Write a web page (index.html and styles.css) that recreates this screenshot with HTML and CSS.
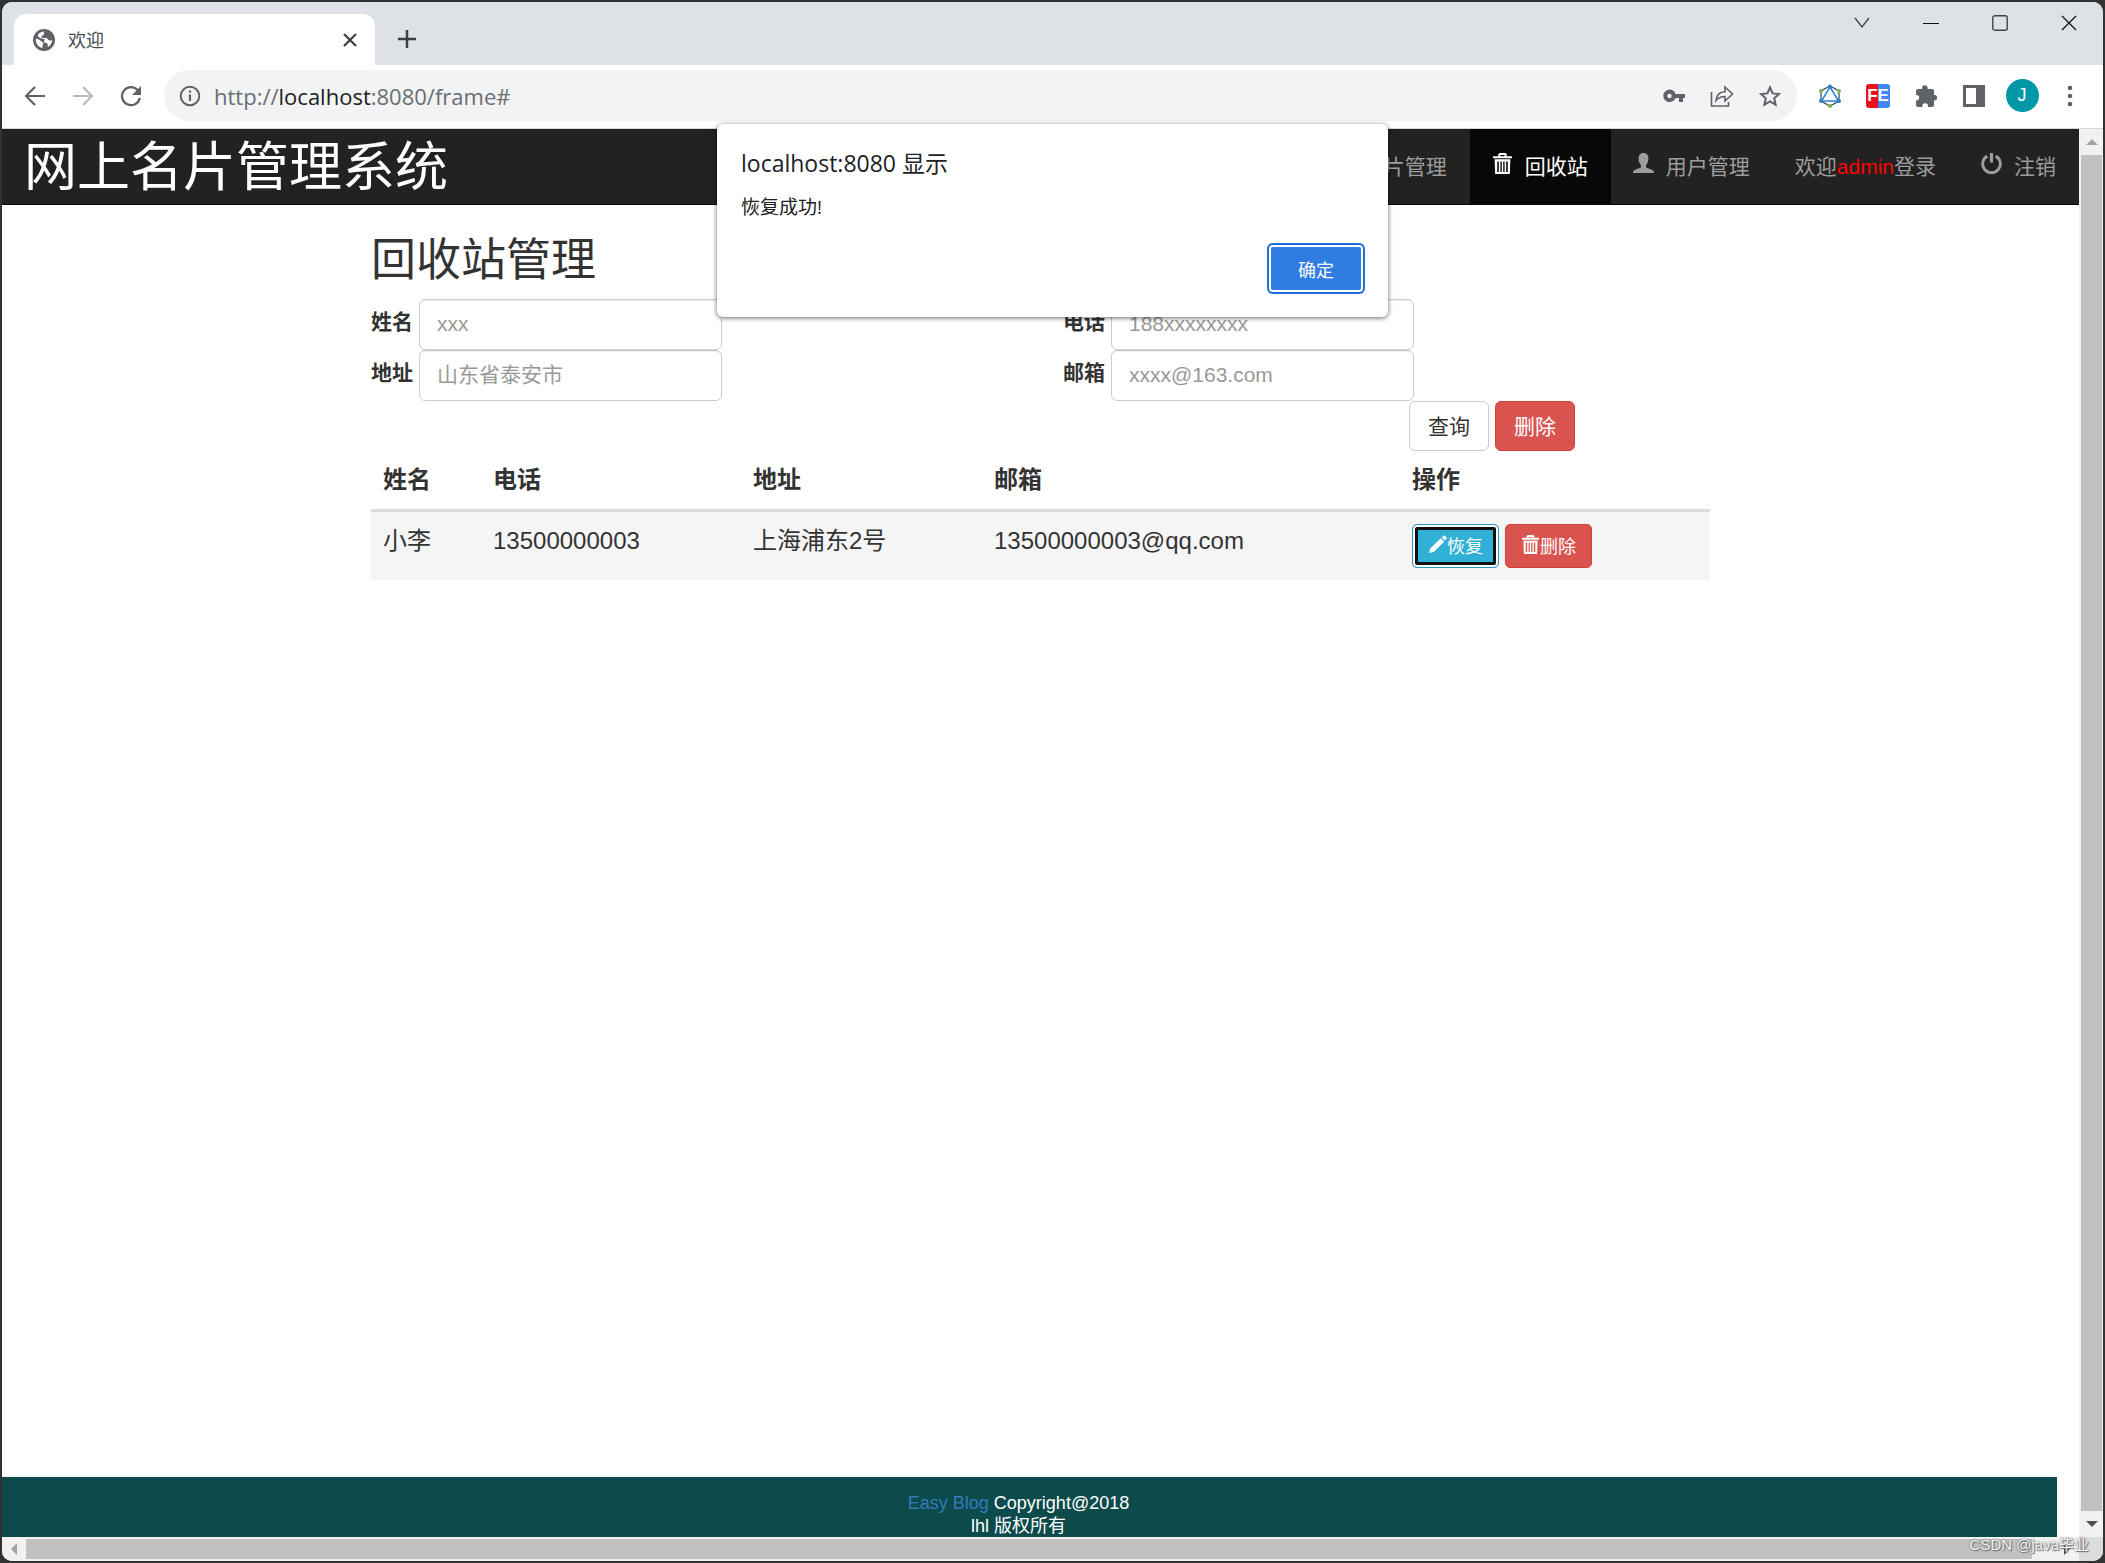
FILE: index.html
```html
<!DOCTYPE html>
<html lang="zh-CN">
<head>
<meta charset="utf-8">
<title>欢迎</title>
<link rel="stylesheet" href="styles.css">
</head>
<body>
<svg class="defs" width="0" height="0" aria-hidden="true">
  <symbol id="trash" viewBox="0 0 20 20"><path fill="currentColor" fill-rule="evenodd" d="M7 0h6l1 1v2h5v2H1V3h5V1zM8 2v1h4V2zM2.500 6h15L17 20H3zM5 8v10h1.500V8zM8 8v10h1.300V8zM10.700 8v10H12V8zM13.500 8v10H15V8z"/></symbol>
  <symbol id="user" viewBox="0 0 20 20"><path fill="currentColor" d="M10 0C7 0 5.300 2 5.300 5.300c0 2.600 1 5 2.200 6.200v2.200L1.500 16.300Q0 17 0 18.500V19h20v-.5q0-1.500-1.500-2.200l-6-2.600v-2.200c1.200-1.200 2.200-3.600 2.200-6.200C14.700 2 13 0 10 0z"/></symbol>
  <symbol id="power" viewBox="0 0 20 20"><path fill="none" stroke="currentColor" stroke-width="2.800" d="M6 3A8.400 8.400 0 1 0 14 3"/><path stroke="currentColor" stroke-width="3" d="M10 0v9"/></symbol>
  <symbol id="pencil" viewBox="0 0 20 20"><path fill="currentColor" d="M13.500 3.500l3.500 3.500L6 18l-5 1 1.500-5zM14.500 2.500L16 1q1-1 2 0l1.200 1.200q1 1 0 2L18 5.800z"/></symbol>
</svg>
<div class="window">
  <header class="tabstrip">
    <div class="tab">
      <svg width="22" height="22" viewBox="0 0 22 22"><circle cx="11" cy="11" r="11" fill="#5f6368"/><path fill="#fff" d="M3 9.500c2 .5 4 1 4.800 2.500.5 1 2.400.6 2.500 2 .1 1.500-1 2-1 5-4-1-7-4.500-6.300-9.500zM11 2.500c-.5 1.500.6 2-.4 3.300-.8 1-2.300.8-2.300 2.300 0 1.200 3 .7 5 .9 1.700.2 1.700 2 3 2.500 1.200.4 1.500-.6 3 0-.4 3-2 5-4.500 6.500-.3-1.500.6-2.600-.6-3.500-1.200-.8-3-.4-3.200-2 0-1.200 1-1.500.6-2.200-.6-.8-2.200-.3-4.400-1.300C5.500 8 4.600 7 5 5.500 6.500 3.500 9 2.500 11 2.500z"/></svg>
      <span class="tab-title">欢迎</span>
      <button class="tab-close" aria-label="关闭标签页"><svg width="14" height="14" viewBox="0 0 14 14"><path d="M1 1l12 12M13 1L1 13" stroke="#3c4043" stroke-width="2.200"/></svg></button>
    </div>
    <button class="tab-new" aria-label="新标签页"><svg width="18" height="18" viewBox="0 0 18 18"><path d="M9 0v18M0 9h18" stroke="#3c4043" stroke-width="2.500"/></svg></button>
    <div class="window-controls">
      <button aria-label="搜索标签页"><svg width="16" height="16" viewBox="0 0 16 16"><path d="M1 3l7 9 7-9" fill="none" stroke="#444" stroke-width="1.300"/></svg></button>
      <button aria-label="最小化"><svg width="16" height="16" viewBox="0 0 16 16"><path d="M0 8.500h16" stroke="#111" stroke-width="1"/></svg></button>
      <button aria-label="最大化"><svg width="16" height="16" viewBox="0 0 16 16"><rect x=".8" y=".8" width="14.400" height="14.400" rx="2" fill="none" stroke="#444" stroke-width="1.400"/></svg></button>
      <button aria-label="关闭"><svg width="16" height="16" viewBox="0 0 16 16"><path d="M1 1l14 14M15 1L1 15" stroke="#111" stroke-width="1.300"/></svg></button>
    </div>
  </header>
  <div class="toolbar">
    <button class="tool" aria-label="后退"><svg width="22" height="22" viewBox="0 0 22 22"><path d="M21 11H2M11 2l-9 9 9 9" fill="none" stroke="#5f6368" stroke-width="2.200"/></svg></button>
    <button class="tool" aria-label="前进"><svg width="22" height="22" viewBox="0 0 22 22"><path d="M1 11h19M11 2l9 9-9 9" fill="none" stroke="#babcbe" stroke-width="2.200"/></svg></button>
    <button class="tool" aria-label="重新加载"><svg width="22" height="22" viewBox="0 0 22 22"><path d="M18 5.500A9 9 0 1 0 19.800 13" fill="none" stroke="#5f6368" stroke-width="2.300"/><path d="M21 1v9h-9z" fill="#5f6368"/></svg></button>
    <div class="omnibox">
      <button class="tool" aria-label="网站信息"><svg width="22" height="22" viewBox="0 0 22 22"><circle cx="11" cy="11" r="9.300" fill="none" stroke="#5f6368" stroke-width="2"/><path d="M11 9.500V16M11 5.500v2.200" stroke="#5f6368" stroke-width="2.200"/></svg></button>
      <span class="url">http://<b>localhost</b>:8080/frame#</span>
      <button class="tool" aria-label="密码"><svg width="22" height="22" viewBox="0 0 22 22"><path fill="#5f6368" fill-rule="evenodd" d="M6.500 4.500a6.300 6.300 0 1 0 6 8.500H16v4h4v-4h2V9H12.500a6.300 6.300 0 0 0-6-4.500zm0 4.200a2.200 2.200 0 1 1 0 4.400 2.200 2.200 0 0 1 0-4.400z"/></svg></button>
      <button class="tool" aria-label="分享"><svg width="24" height="22" viewBox="0 0 24 22"><path d="M1.500 7v14h17v-4M6 15.500C6.500 10 10 7 15 6.800V2l7.500 7-7.500 7v-4.500c-4 0-6.500 1-9 4z" fill="none" stroke="#5f6368" stroke-width="1.600"/></svg></button>
      <button class="tool" aria-label="收藏"><svg width="22" height="22" viewBox="0 0 22 22"><path d="M11 2.500l2.600 5.900 6.400.6-4.800 4.300 1.400 6.300L11 16.300l-5.600 3.300 1.400-6.300L2 9l6.400-.6z" fill="none" stroke="#5f6368" stroke-width="2"/></svg></button>
    </div>
    <div class="extensions">
      <button class="tool" aria-label="扩展"><svg width="24" height="24" viewBox="0 0 24 24"><path d="M12 2l9 5v10l-9 5-9-5V7z" fill="none" stroke="#35536b" stroke-width="1.300"/><path d="M12 3l8.500 14h-17z" fill="none" stroke="#2b7fd0" stroke-width="1.500"/><g fill="#7ab648"><circle cx="3" cy="7" r="2"/><circle cx="21" cy="7" r="2"/><circle cx="12" cy="22" r="2"/></g><g fill="#2b7fd0"><circle cx="12" cy="2.500" r="2"/><circle cx="3" cy="17" r="2"/><circle cx="21" cy="17" r="2"/></g></svg></button>
      <button class="tool" aria-label="FE助手"><span class="fe">FE</span></button>
      <button class="tool" aria-label="扩展程序"><svg width="22" height="22" viewBox="0 0 22 22"><path fill="#5f6368" d="M1 6q0-2 2-2h4V3a2.800 2.800 0 0 1 5.600 0v1H17q2 0 2 2v4h.5a2.700 2.700 0 0 1 0 5.400H19V20q0 2-2 2h-4v-1a2.800 2.800 0 0 0-5.600 0v1H3q-2 0-2-2v-4.500h1a2.800 2.800 0 0 0 0-5.500H1z"/></svg></button>
      <button class="tool" aria-label="侧边栏"><svg width="22" height="22" viewBox="0 0 22 22"><path fill="#5f6368" fill-rule="evenodd" d="M0 0h22v22H0zM3 3v16h10V3z"/></svg></button>
      <button class="tool" aria-label="个人资料"><span class="avatar">J</span></button>
      <button class="tool" aria-label="菜单"><svg width="6" height="22" viewBox="0 0 6 22"><g fill="#5f6368"><circle cx="3" cy="3" r="2.300"/><circle cx="3" cy="11" r="2.300"/><circle cx="3" cy="19" r="2.300"/></g></svg></button>
    </div>
  </div>
  <div class="viewport">
    <div class="page">
      <nav class="navbar">
        <a class="brand" href="#">网上名片管理系统</a>
        <ul class="menu">
          <li><a href="#"><svg class="glyph"><use href="#user"/></svg>名片管理</a></li>
          <li class="active"><a href="#"><svg class="glyph"><use href="#trash"/></svg>回收站</a></li>
          <li><a href="#"><svg class="glyph"><use href="#user"/></svg>用户管理</a></li>
          <li><a href="#"><span>欢迎<em>admin</em>登录</span></a></li>
          <li><a href="#"><svg class="glyph"><use href="#power"/></svg>注销</a></li>
        </ul>
      </nav>
      <main class="container">
        <h1>回收站管理</h1>
        <form class="search">
          <div class="field"><label for="name">姓名</label><input id="name" type="text" placeholder="xxx"></div>
          <div class="field"><label for="phone">电话</label><input id="phone" type="text" placeholder="188xxxxxxxx"></div>
          <div class="field"><label for="address">地址</label><input id="address" type="text" placeholder="山东省泰安市"></div>
          <div class="field"><label for="email">邮箱</label><input id="email" type="text" placeholder="xxxx@163.com"></div>
          <div class="actions"><button type="button" class="btn">查询</button><button type="button" class="btn danger">删除</button></div>
        </form>
        <table class="cards">
          <colgroup><col class="c-name"><col class="c-phone"><col class="c-address"><col class="c-email"><col></colgroup>
          <thead><tr><th>姓名</th><th>电话</th><th>地址</th><th>邮箱</th><th>操作</th></tr></thead>
          <tbody><tr><td>小李</td><td>13500000003</td><td>上海浦东2号</td><td>13500000003@qq.com</td>
            <td><div class="row-actions"><button class="btn small info"><svg class="glyph"><use href="#pencil"/></svg>恢复</button><button class="btn small danger"><svg class="glyph"><use href="#trash"/></svg>删除</button></div></td></tr></tbody>
        </table>
      </main>
      <footer class="footer"><p><a href="#">Easy Blog</a> Copyright@2018<br>lhl 版权所有</p></footer>
    </div>
    <div class="scroll-y"><i class="arrow up"></i><i class="thumb"></i><i class="arrow down"></i></div>
    <div class="scroll-x"><i class="arrow left"></i><i class="thumb"></i><i class="arrow right"></i></div>
    <div class="corner"></div>
  </div>
</div>
<div class="dialog" role="alertdialog" aria-labelledby="dlg-title" aria-describedby="dlg-text">
  <h2 id="dlg-title">localhost:8080 显示</h2>
  <p id="dlg-text">恢复成功!</p>
  <button class="ok">确定</button>
</div>
<div class="watermark">CSDN @java毕业</div>
</body>
</html>
```
FILE: styles.css
```css
* { box-sizing: border-box; }
body {
  margin: 0;
  padding: 2px;
  min-height: 100vh;
  position: relative;
  display: flex;
  background: #303234;
  font-family: "Liberation Sans", "Noto Sans CJK SC", sans-serif;
  color: #333;
}
button { font-family: inherit; margin: 0; padding: 0; border: 0; background: none; }
a { text-decoration: none; }
.defs { position: absolute; }
.window {
  flex: 1;
  min-width: 0;
  display: flex;
  flex-direction: column;
  border-radius: 10px;
  overflow: hidden;
  background: #fff;
}

/* browser chrome */
.tabstrip {
  height: 63px;
  display: flex;
  align-items: flex-end;
  background: #dee1e6;
}
.tab {
  width: 361px;
  height: 51px;
  margin-left: 12px;
  padding: 0 18px 0 19px;
  display: flex;
  align-items: center;
  gap: 13px;
  background: #fff;
  border-radius: 12px 12px 0 0;
}
.tab-title { flex: 1; font: 18px/24px "Open Sans", "Noto Sans CJK SC", sans-serif; color: #45494d; }
.tab-close, .tab-new { display: flex; }
.tab-new { margin-left: 23px; padding-bottom: 17px; }
.window-controls { align-self: flex-start; margin-left: auto; display: flex; }
.window-controls button { width: 69px; height: 42px; display: flex; align-items: center; justify-content: center; }
.toolbar {
  height: 64px;
  padding: 0 9px 2px;
  display: flex;
  align-items: center;
  border-bottom: 1px solid #d5d7da;
}
.tool { width: 48px; height: 48px; flex: none; display: flex; align-items: center; justify-content: center; }
.omnibox {
  flex: 1;
  height: 51px;
  margin: 0 9px;
  padding: 0 3px 0 2px;
  display: flex;
  align-items: center;
  border-radius: 26px;
  background: #f1f3f4;
}
.url { flex: 1; font: 22px/28px "Open Sans", sans-serif; color: #6a6e72; }
.url b { font-weight: 400; color: #202124; }
.extensions { display: flex; }
.fe {
  width: 24px;
  border-radius: 3px;
  font: bold 17px/24px "Liberation Sans", sans-serif;
  text-align: center;
  color: #fff;
  background: linear-gradient(90deg, #e8101c 50%, #4285f4 50%);
}
.avatar { width: 33px; border-radius: 50%; background: #0097a7; color: #fff; font: 18px/33px "Liberation Sans", sans-serif; }

/* page area and scroll bars */
.viewport { flex: 1; display: grid; grid-template: 1fr 24px / minmax(0, 1fr) 24px; }
.page { display: flex; flex-direction: column; }
.scroll-y, .scroll-x { display: flex; background: #f1f1f1; }
.scroll-y { flex-direction: column; padding: 0 1px 0 2px; }
.scroll-x { padding: 2px 0; }
.thumb { flex: 1; background: #c1c1c1; }
.scroll-x .thumb { margin-right: 23px; }
.arrow { flex: none; width: 24px; height: 20px; display: flex; align-items: center; justify-content: center; color: #a3a3a3; }
.arrow::before { content: ""; border: 6px solid transparent; }
.scroll-y .arrow { width: 21px; height: 26px; }
.up::before { border-top: 0; border-bottom-color: currentColor; }
.down::before { border-bottom: 0; border-top-color: currentColor; }
.left::before { border-left: 0; border-right-color: currentColor; }
.right::before { border-right: 0; border-left-color: currentColor; }
.down, .right { color: #505050; }
.corner { background: #dcdcdc; }

.navbar {
  height: 76px;
  padding-left: 22px;
  display: flex;
  align-items: stretch;
  justify-content: space-between;
  background: #222;
  border-bottom: 1px solid #080808;
  white-space: nowrap;
}
.brand { font-size: 53px; line-height: 78px; color: #fff; }
.menu { margin: 0; padding: 0; list-style: none; display: flex; font-size: 21px; }
.menu a { height: 75px; padding: 0 23px 4px 22px; display: flex; align-items: center; gap: 12px; color: #9d9d9d; }
.menu .active a { background: #080808; color: #fff; }
.menu em { font-style: normal; color: #f00; }
.glyph { width: 21px; height: 21px; flex: none; }
.menu .glyph { margin-bottom: 2px; }

.container { width: 100%; max-width: 1339px; margin: 0 auto; flex: 1; }
h1 { margin: 31px 0 13px; font-size: 45px; line-height: 50px; font-weight: 400; }
.search { margin-right: -45px; display: grid; grid-template-columns: 1fr 1fr; }
.field { display: flex; align-items: center; gap: 6px; }
.field label { font-size: 21px; line-height: 30px; font-weight: 700; padding-bottom: 6px; }
.field input {
  width: 303px;
  height: 51px;
  padding: 0 17px 2px;
  border: 1px solid #ccc;
  border-radius: 6px;
  box-shadow: inset 0 1px 1px rgba(0, 0, 0, .075);
  font: 21px/30px "Liberation Sans", "Noto Sans CJK SC", sans-serif;
}
.field input::placeholder { color: #999; opacity: 1; }
.actions { grid-column: 1 / -1; margin-left: 75%; display: flex; gap: 6px; }
.btn {
  height: 50px;
  padding: 0 18px 3px;
  border: 1px solid #ccc;
  border-radius: 6px;
  background: #fff;
  font-size: 21px;
  color: #333;
}
.btn.danger { background: #d9534f; border-color: #d43f3a; color: #fff; }
.btn.info {
  background: #31b0d5;
  border-color: #269abc;
  color: #fff;
  box-shadow: inset 0 0 0 2px #fff, inset 0 0 0 5px #101010;
}
.btn.small { height: 44px; padding: 0 15px 3px; display: flex; align-items: center; font-size: 18px; border-radius: 5px; }
.btn.small .glyph { width: 19px; height: 19px; }
.row-actions { display: flex; gap: 6px; }
.cards { width: 100%; table-layout: fixed; border-spacing: 0; font-size: 24px; line-height: 34px; }
.cards th, .cards td { padding: 12px; text-align: left; vertical-align: top; }
.cards th { border-bottom: 3px solid #ddd; }
.cards td { background: #f5f5f5; }
.c-name { width: 110px; }
.c-phone { width: 260px; }
.c-address { width: 241px; }
.c-email { width: 418px; }

.footer { margin-right: 22px; padding: 15px 22px 0 0; height: 60px; background: #0c4a4b; color: #fff; text-align: center; }
.footer p { margin: 0; font-size: 18px; line-height: 23px; }
.footer a { color: #337ab7; }

.dialog {
  position: absolute;
  top: 124px;
  left: 0;
  right: 0;
  width: 671px;
  margin: 0 auto;
  padding: 23px 23px 23px 24px;
  display: flex;
  flex-direction: column;
  border-radius: 6px;
  background: #fff;
  box-shadow: 0 1px 5px rgba(0, 0, 0, .6);
  font-family: "Open Sans", "Noto Sans CJK SC", sans-serif;
  color: #202124;
}
.dialog h2 { margin: 0; font-size: 23px; line-height: 32px; font-weight: 400; }
.dialog p { margin: 14px 0 22px; font-size: 19px; line-height: 28px; }
.ok {
  align-self: flex-end;
  width: 98px;
  height: 51px;
  border-radius: 6px;
  background: #2f7de1;
  box-shadow: inset 0 0 0 2px #1a6fdc, inset 0 0 0 4px #fff;
  font-size: 18px;
  color: #fff;
}
.watermark {
  position: absolute;
  right: 16px;
  bottom: 6px;
  font: 15px/24px "Liberation Sans", "Noto Sans CJK SC", sans-serif;
  color: #f5f5f5;
  text-shadow: 0 0 2px #555, 1px 1px 1px #777;
}
```
